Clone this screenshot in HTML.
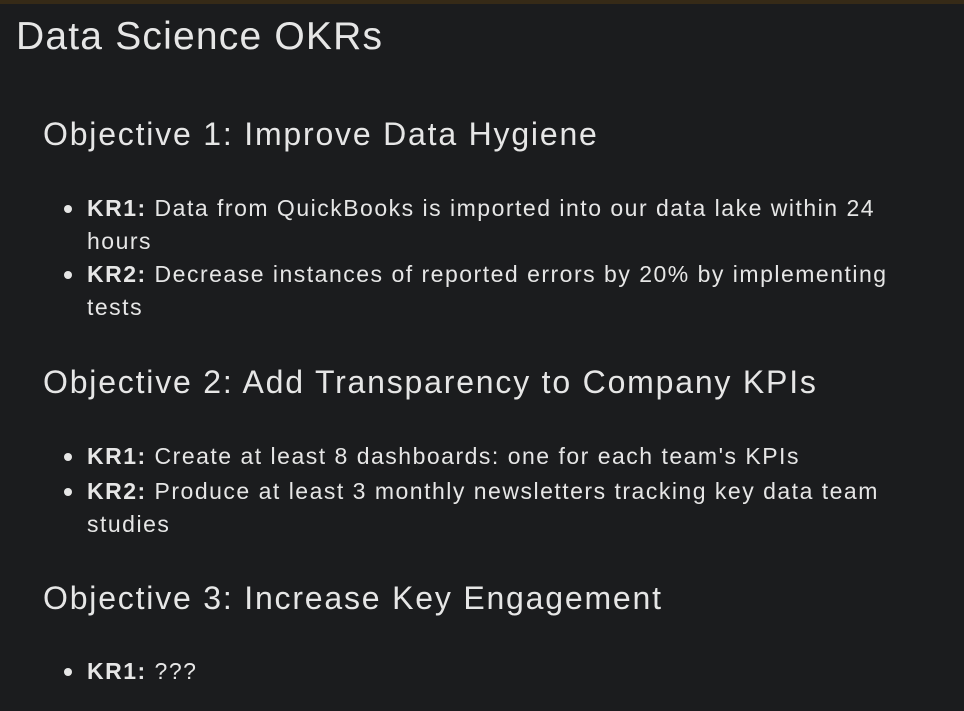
<!DOCTYPE html>
<html><head><style>
html,body{margin:0;padding:0;}
body{width:964px;height:711px;background:#1b1c1e;color:#e6e6e6;font-family:"Liberation Sans",sans-serif;position:relative;overflow:hidden;border-top:4px solid #362a17;box-sizing:border-box;}
.a{position:absolute;white-space:nowrap;}
h1{font-weight:normal;font-size:39px;margin:0;letter-spacing:1.2px;}
.h{font-size:32px;letter-spacing:1.8px;}
.l{font-size:23px;letter-spacing:1.5px;}
.d{position:absolute;width:8px;height:8px;border-radius:50%;background:#e6e6e6;}
b{font-weight:bold;}
</style></head><body>
<div class="a" style="left:16px;top:11px"><h1>Data Science OKRs</h1></div>
<div class="a h" style="left:43px;top:112px">Objective 1: Improve Data Hygiene</div>
<div class="d" style="left:64px;top:201px"></div>
<div class="a l" style="left:87px;top:191px"><b>KR1:</b> Data from QuickBooks is imported into our data lake within 24</div>
<div class="a l" style="left:87px;top:224px">hours</div>
<div class="d" style="left:64px;top:267px"></div>
<div class="a l" style="left:87px;top:257px"><b>KR2:</b> Decrease instances of reported errors by 20% by implementing</div>
<div class="a l" style="left:87px;top:290px">tests</div>
<div class="a h" style="left:43px;top:360px">Objective 2: Add Transparency to Company KPIs</div>
<div class="d" style="left:64px;top:449px"></div>
<div class="a l" style="left:87px;top:439px"><b>KR1:</b> Create at least 8 dashboards: one for each team's KPIs</div>
<div class="d" style="left:64px;top:484px"></div>
<div class="a l" style="left:87px;top:474px"><b>KR2:</b> Produce at least 3 monthly newsletters tracking key data team</div>
<div class="a l" style="left:87px;top:507px">studies</div>
<div class="a h" style="left:43px;top:576px">Objective 3: Increase Key Engagement</div>
<div class="d" style="left:64px;top:664px"></div>
<div class="a l" style="left:87px;top:654px"><b>KR1:</b> ???</div>
</body></html>
